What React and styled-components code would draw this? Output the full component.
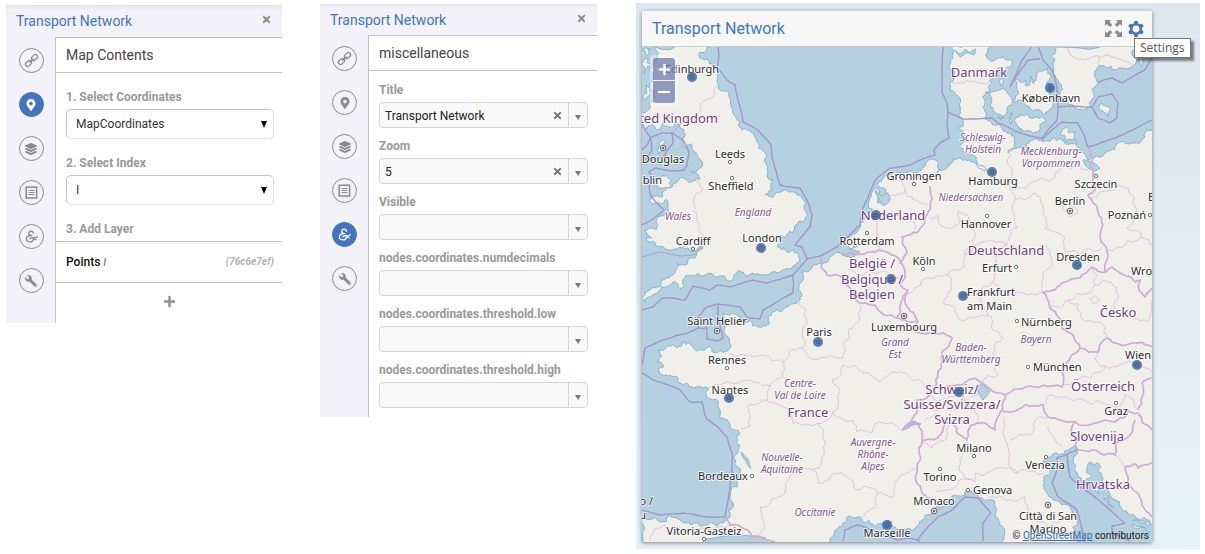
import React from 'react';
import styled, { createGlobalStyle, css } from 'styled-components';
import { FaLayerGroup, FaMapMarkerAlt, FaPlus, FaTimes, FaWrench } from 'react-icons/fa';

const GlobalStyle = createGlobalStyle`
	* {
		box-sizing: border-box;
	}
	body {
		margin: 0;
		background: #fff;
		color: #333;
		font-family: Roboto, 'Liberation Sans', sans-serif;
		font-size: 12px;
		line-height: 16px;
	}
	button, input, select {
		font: inherit;
		color: inherit;
	}
	button {
		padding: 0;
		border: 0;
		background: none;
		cursor: pointer;
	}
`;

const Page = styled.main`
	display: grid;
	grid-template-columns: 276px 276px minmax(0, 1fr);
	column-gap: 38px;
	align-items: start;
	padding: 3px 5px 5px 6px;
`;

/* settings panels */

const Panel = styled.section`
	display: grid;
	grid-template-columns: ${(props) => props.$rail}px 1fr;
	margin-top: ${(props) => props.$top}px;
	background: #f2f2f8;
`;

const PanelHeader = styled.header`
	grid-column: 1 / -1;
	display: flex;
	align-items: center;
	justify-content: space-between;
	height: ${(props) => props.$height}px;
	padding: 0 10px;
	background: linear-gradient(#e4e4ea, #f2f2f8 5px);
`;

const PanelTitle = styled.h2`
	margin: 0;
	font-size: 14px;
	font-weight: 400;
	color: #4475ba;
`;

const CloseButton = styled.button`
	display: flex;
	margin-bottom: 3px;
	color: #8b8b8b;
`;

const Rail = styled.nav`
	display: flex;
	flex-direction: column;
	align-items: center;
	gap: 19px;
	padding: 11px 0 10px 1px;
`;

const RailButton = styled.button`
	display: flex;
	align-items: center;
	justify-content: center;
	width: 25px;
	height: 25px;
	border: 1px solid #8a8a8a;
	border-radius: 50%;
	color: #8a8a8a;
	${(props) =>
		props.$active &&
		css`
			border-color: #4475ba;
			background: #4475ba;
			color: #fff;
		`};
`;

const PanelBody = styled.div`
	border-top: 1px solid #c4c4c8;
	border-left: 1px solid #c4c4c8;
	background: #fff;
`;

const Subtitle = styled.h3`
	margin: 0;
	padding: 9px 10px;
	border-bottom: 1px solid #c4c4c8;
	font-size: 14px;
	font-weight: 400;
	color: #444;
`;

const Fields = styled.div`
	display: flex;
	flex-direction: column;
	gap: ${(props) => props.$gap}px;
	padding: ${(props) => props.$pad};
`;

const Field = styled.div`
	display: flex;
	flex-direction: column;
	gap: 4px;
`;

const Label = styled.label`
	font-weight: 700;
	color: #999;
`;

const SelectBox = styled.div`
	display: grid;
	align-items: center;

	> * {
		grid-area: 1 / 1;
	}
	> svg {
		justify-self: end;
		margin-right: 7px;
		color: #000;
		pointer-events: none;
	}
`;

const Select = styled.select`
	appearance: none;
	width: 100%;
	height: 30px;
	padding: 0 9px;
	border: 1px solid #c4c4c4;
	border-bottom-color: #e4e4e4;
	border-right-color: #dcdcdc;
	border-radius: 5px;
	background: #fff;
`;

const StepTitle = styled.h4`
	margin: 0;
	padding: 0 10px 4px;
	font-size: 12px;
	font-weight: 700;
	color: #999;
`;

const LayerRow = styled.div`
	display: flex;
	align-items: center;
	justify-content: space-between;
	height: 42px;
	padding: 0 8px 0 10px;
	border: solid #c4c4c8;
	border-width: 1px 0;
`;

const LayerName = styled.span`
	font-weight: 500;
	color: #111;

	em {
		font-size: 10px;
		color: #777;
	}
`;

const LayerId = styled.em`
	font-size: 10px;
	font-weight: 700;
	color: #b0b0b0;
`;

const AddButton = styled.button`
	display: flex;
	align-items: center;
	justify-content: center;
	width: 100%;
	height: 40px;
	padding-bottom: 3px;
	color: #8f8f8f;
`;

const Combo = styled.div`
	display: flex;
	height: 26px;
	border: 1px solid #d4d4d4;
	border-radius: 4px;
	background: #f9f9f9;
	overflow: hidden;
`;

const ComboInput = styled.input`
	flex: 1;
	min-width: 0;
	padding: 1px 5px 0;
	border: 0;
	outline: 0;
	background: transparent;
	color: #222;
`;

const ComboButton = styled.button`
	display: flex;
	align-items: center;
	justify-content: center;
	width: ${(props) => (props.$divided ? 19 : 22)}px;
	padding-top: ${(props) => (props.$divided ? 4 : 0)}px;
	border-left: ${(props) => (props.$divided ? '1px solid #d4d4d4' : '0')};
	color: #777;
`;

/* map widget */

const Stage = styled.section`
	margin-left: 2px;
	padding: 8px 48px 7px 6px;
	background: linear-gradient(#dde5ed, #e2eaf2 35%, #e5f1f8);
`;

const MapCard = styled.article`
	background: #f7f7f7;
	box-shadow: 0 1px 4px rgba(0, 0, 0, 0.45);
`;

const MapHeader = styled.header`
	display: flex;
	align-items: center;
	justify-content: space-between;
	height: 36px;
	padding: 0 8px 0 10px;
	border-bottom: 1px solid #ccc;
`;

const MapTitle = styled.h1`
	margin: 0;
	font-size: 16px;
	font-weight: 400;
	color: #4475ba;
`;

const Tools = styled.div`
	display: flex;
	align-items: center;
	gap: 6px;
`;

const ToolButton = styled.button`
	position: relative;
	display: flex;
	color: ${(props) => (props.$active ? '#4475ba' : '#8a8a8a')};
`;

const Tooltip = styled.span`
	position: absolute;
	z-index: 2;
	top: 17px;
	left: 6px;
	padding: 1px 5px;
	border: 1px solid #767676;
	background: #fff;
	box-shadow: 3px 3px 2px rgba(0, 0, 0, 0.45);
	font-family: 'Open Sans', sans-serif;
	color: #575757;
`;

const MapView = styled.div`
	position: relative;
`;

const ZoomControl = styled.div`
	position: absolute;
	top: 8px;
	left: 8px;
	display: flex;
	flex-direction: column;
	gap: 1px;
	padding: 3px;
	border-radius: 4px;
	background: rgba(255, 255, 255, 0.4);
`;

const ZoomButton = styled.button`
	display: flex;
	align-items: center;
	justify-content: center;
	width: 22px;
	height: 22px;
	border-radius: ${(props) => (props.$first ? '3px 3px 0 0' : '0 0 3px 3px')};
	background: rgba(84, 97, 163, 0.62);
	color: #fff;
`;

const Attribution = styled.p`
	position: absolute;
	right: 3px;
	bottom: 0;
	margin: 0;
	font-size: 10px;
	line-height: 12px;
	color: #222;

	a {
		color: #3c6bb0;
	}
`;

const MapSvg = styled.svg`
	display: block;
	width: 100%;
	height: auto;
	background: #b5d0de;
	font-family: 'Noto Sans', sans-serif;
`;

const MapText = styled.text`
	font-size: 11px;
	fill: #2b2b2b;
	stroke: rgba(255, 255, 255, 0.75);
	stroke-width: 2px;
	stroke-linejoin: round;
	paint-order: stroke;
	${(props) =>
		props.$kind === 'country' &&
		css`
			font-size: 13px;
			fill: #703d80;
		`};
	${(props) =>
		props.$kind === 'region' &&
		css`
			font-size: 10px;
			font-style: italic;
			fill: #80588f;
		`};
`;

/* Coast and border points, in map pixels */

const land = [
	// Great Britain
	'655,47 710,47 699,53 704,60 712,64 717,76 719,84 729,93 734,115 742,130 755,137 762,150 768,167 773,180 772,190 765,195 773,197 780,192 797,195 804,208 803,222 793,233 790,231 785,238 778,236 780,242 777,247 787,252 798,253 797,263 780,272 760,275 752,273 748,276 737,273 730,281 718,277 705,275 692,275 683,282 682,288 670,285 660,290 650,297 645,302 642,298 650,290 667,278 677,263 693,258 703,248 700,246 693,252 680,247 667,250 656,246 648,242 646,238 652,238 644,231 656,230 663,216 668,208 667,200 659,203 649,201 652,197 662,197 671,188 676,183 686,179 693,181 700,179 691,172 697,170 702,167 698,158 693,150 691,144 686,148 683,138 684,130 676,123 670,127 663,123 659,130 652,125 647,129 643,121 650,108 655,97 650,87 653,76 649,70 656,60',
	'657,150 662,140 666,142 665,150 658,154',
	'655,180 662,176 670,179 671,185 664,188 657,186',
	'643,100 646,85 650,90 648,97',
	'643,62 648,58 650,66 644,74',
	'642,50 650,48 646,55',
	// Mainland
	'951,47 991,47 986,54 994,60 1003,56 1012,60 1010,67 1001,68 995,76 990,80 990,90 983,97 985,103 983,108 987,113 985,118 993,125 1002,128 1010,133 1015,143 1008,153 1025,148 1038,140 1047,141 1053,137 1056,140 1062,139 1067,145 1072,143 1078,150 1088,160 1097,156 1115,150 1135,143 1145,133 1158,126 1158,524 1145,518 1140,520 1128,513 1120,506 1115,500 1108,490 1102,477 1101,467 1097,463 1093,466 1090,462 1092,477 1085,484 1080,477 1075,468 1073,457 1078,452 1077,447 1066,450 1055,453 1043,462 1050,472 1044,478 1044,487 1050,497 1062,505 1072,512 1078,520 1085,548 1007,548 1005,533 1000,523 997,510 988,500 977,495 967,490 955,495 942,507 932,513 922,520 915,528 910,529 893,527 887,521 880,523 872,524 863,522 857,517 843,523 835,530 835,548 636,548 636,517 660,522 680,520 697,523 710,522 723,523 730,517 733,503 737,487 738,467 738,450 740,445 737,440 738,430 730,427 720,418 718,403 710,399 707,398 708,390 702,387 694,388 687,383 678,382 670,375 658,370 664,366 657,362 662,356 658,350 677,348 690,343 694,349 702,350 708,347 713,352 720,350 730,348 725,327 722,313 729,315 737,315 740,323 758,327 766,326 768,318 772,312 787,307 800,300 801,292 802,272 812,267 827,262 840,253 848,256 860,252 850,249 858,246 843,245 852,235 860,228 865,218 870,198 875,188 879,192 877,202 884,206 884,202 890,196 884,188 877,183 883,177 895,173 913,171 925,163 935,160 938,165 937,173 943,170 948,167 953,158 962,160 972,162 987,170 977,162 965,153 960,145 967,141 961,138 965,133 957,128 963,123 958,117 960,107 957,95 950,90 949,67 952,55',
	// Danish islands and Sweden
	'987,93 994,92 1003,88 1008,94 1012,100 1008,112 995,113 990,105',
	'1013,112 1011,124 1009,121 1011,113',
	'997,117 1004,117 1001,120',
	'1015,80 1021,82 1025,80 1026,86 1029,86 1031,76 1034,84 1037,73 1047,68 1052,77 1046,84 1050,90 1050,97 1053,103 1043,115 1030,109 1015,103 1016,96 1019,92',
	'1015,118 1028,115 1032,119 1043,117 1045,122 1036,132 1028,130 1017,125',
	'1000,80 1002,76 1001,86',
	'1058,47 1052,55 1053,63 1058,80 1062,90 1058,98 1075,108 1090,107 1092,90 1098,83 1097,68 1115,70 1121,68 1132,67 1133,50 1140,47',
	'1060,134 1066,127 1069,133 1076,132 1077,143 1072,139 1066,142',
	'1102,103 1110,108 1108,117 1100,110',
	'1139,58 1143,52 1142,66',
	// Croatian islands
	'1085,486 1087,482 1089,490',
	'1093,488 1098,486 1099,494',
	'1103,498 1108,497 1114,507',
	'1132,524 1144,527 1150,532 1138,529',
	'1133,520 1148,522 1151,524',
];

const lakes = [
	'954,50 960,54 965,49 970,53 976,49 974,55 966,53 960,57',
	'875,190 882,196 888,193 890,200 884,206 880,202',
	'983,400 976,386 981,384 987,388 990,391',
	'903,430 907,424 915,421 921,424 913,425',
	'1083,160 1094,163 1100,168 1093,171 1086,166',
	'741,452 748,459 751,469 747,464',
	'1018,127 1022,129 1020,131',
];

const seaLines = [
	'718,47 719,55 717,68 727,80 735,85 738,100 743,122 758,130 771,145 772,157 780,185 800,188 807,200 812,215 810,227 795,245 802,247 807,259 820,256 837,247 860,225 863,208 872,187 877,178 890,168 910,165 920,160 935,155 934,150 940,143 949,138 947,125 948,112 947,103 942,93 942,67 943,47',
	'807,259 793,275 793,293 777,302 763,310 760,319 747,318 740,307 718,304 705,308 698,318 698,328 690,332 663,340 645,348 642,365',
	'793,275 767,283 753,280 730,287 717,285 710,290 693,286 685,300 662,298 653,307 642,310',
	'718,304 718,318 723,338 718,341 707,339 707,328 698,328',
	'642,373 653,380 680,390 690,402 702,402 706,418 718,427 727,437 732,453 730,487 725,517 707,517 683,513 660,515 642,510',
	'843,541 845,530 857,525 880,533 897,540 908,538 920,541',
	'917,541 925,530 938,517 952,510 965,497 978,498 991,513 983,523 983,541',
	'1077,450 1057,458 1057,470 1052,483 1058,497 1077,510 1082,530 1085,542',
	'1067,454 1070,477 1082,488 1102,503 1125,523 1112,526 1112,533 1130,541',
	'1032,47 1022,60 1010,87 1022,68 1028,60 1040,59',
	'1038,47 1043,60 1053,72 1057,88 1058,107 1092,107 1098,97 1112,94 1118,103 1117,118 1110,123 1098,118 1092,107',
	'1058,107 1057,120 1042,138 1030,136 1015,131 998,123 992,118 963,119 948,112',
	'1042,140 1062,122 1078,123 1085,137 1088,147 1115,138 1152,120',
	'1098,82 1112,78 1122,83 1135,75 1145,70 1152,57',
	'642,150 647,145 651,137 662,133 672,133 683,140 689,152 687,165 684,170 675,171 655,168 649,172 653,178 649,187 651,196 664,210 657,216 642,225',
	'642,124 650,137 652,150 645,160',
	'672,133 673,143 664,156 652,160',
];

const faintSeaLines = ['642,257 660,252 680,256 693,255 703,248', '672,133 683,122'];

const borders = [
	'930,186 928,212 918,232 902,237 907,252 900,263 905,273 900,285 908,290 905,300 913,312 918,322 915,332 933,333 952,338 942,352 938,372 935,388',
	'820,257 827,275 837,275 850,288 860,303 875,305 897,318 918,322',
	'908,292 901,302 897,318',
	'842,254 860,254 880,250 890,254 902,263',
	'1088,147 1093,173 1095,190 1088,195 1098,212 1100,238 1107,252 1105,272 1092,267 1065,282 1043,293 1050,308 1062,328 1080,348 1098,352 1107,338 1132,343 1152,347',
	'1105,272 1112,267 1135,282 1140,280 1139,290 1145,297 1152,288',
	'1080,348 1067,362 1062,387 1025,387 1005,395 982,383 975,378 962,385 935,388 917,400 913,418 903,430 917,423 922,442 938,438 945,424 953,423 957,433 967,440 972,425 978,423 995,430 997,418 1003,410 1005,395',
	'1003,412 1025,405 1043,405 1048,417 1075,422 1115,422 1128,410 1138,413 1152,430',
	'1138,410 1142,383 1152,378',
	'1075,422 1071,430 1078,450 1095,450 1115,455 1116,443 1128,437 1135,420',
	'1152,463 1138,468 1135,464 1125,467 1128,483 1142,503 1152,517',
	'922,442 917,467 922,493 936,500 940,510',
	'725,517 730,525 745,529 753,537 775,541',
	'963,119 958,118',
];

const regions = [
	'726,80 715,88 714,96 700,110 693,118 686,124',
	'687,174 698,182 702,190 694,200 697,222 703,236 703,245',
	'798,300 805,308 803,332 802,348 783,362 763,355 730,354',
	'860,305 860,318 843,345 843,358 810,358 802,348',
	'783,362 783,377 770,386 767,400 747,407 750,427 740,428',
	'708,388 725,383 745,380 770,386',
	'767,400 783,407 793,423 818,423 833,412 832,380 843,365 863,372 880,382 897,373 920,380 935,388',
	'818,423 823,437 822,457 813,470 817,483 832,475 847,477 857,490 877,493 893,497 893,490 900,477 918,468',
	'813,470 797,473 785,493 760,507 763,520 758,541',
	'833,412 853,420 857,432 873,432 878,422 903,430',
	'877,493 875,507 863,517',
	'650,541 665,525 690,530 715,528 730,525',
	'930,218 938,215 947,228 960,222 958,212 968,215 968,226 975,236 965,255 948,275 935,277 915,288 908,295',
	'965,255 990,240 1007,245 1017,228 1015,198 1012,173 1010,153',
	'1015,198 1035,193 1043,205 1045,228 1065,238 1065,252 1080,254 1102,247',
	'1015,190 1032,182 1062,167 1093,170',
	'948,275 950,292 943,302 955,308 958,318 973,317 988,315 1003,338 995,365 998,375 982,383',
	'1007,245 995,255 992,282 1003,292 1018,292 1043,292 1052,265 1047,245',
	'988,315 980,300 992,282',
	'1062,208 1070,203 1078,213 1070,217 1062,208',
	'1092,198 1110,190 1128,188 1127,228 1142,238 1152,245',
	'1107,250 1128,240 1142,238',
	'1050,307 1068,300 1078,303 1082,318 1105,328 1107,338',
	'1068,300 1090,292 1095,285 1092,267',
	'1095,285 1112,283 1118,295 1115,312 1130,318 1148,322 1152,300',
	'1089,299 1095,296 1100,300 1094,304 1089,299',
	'1098,352 1095,360 1105,366 1100,372 1080,378 1062,387',
	'1043,405 1050,395 1062,397 1090,404 1115,407 1125,395 1138,410',
	'1105,366 1125,363 1152,372',
	'1005,417 1008,447 1018,473 1045,473',
	'1018,473 998,468 975,473 975,482 948,490 935,492',
	'967,440 960,460 975,482',
	'1048,417 1035,420 1030,435 1010,440',
	'1048,427 1055,440 1062,447',
	'988,497 1010,500 1025,497 1032,517 1048,528 1062,520',
	'1068,47 1075,58 1095,56 1115,57 1132,67',
	'1098,68 1098,56',
	'952,82 968,80 982,83 993,75',
	'922,442 932,448 945,440 953,423',
	'920,410 930,402 935,412 945,402 955,410 965,400 975,412 978,423',
	'925,420 938,415 945,424',
	'930,395 942,400 955,395 968,400 980,395',
	'852,270 862,276 880,272 894,278 905,273',
	'880,250 876,232 880,218 890,212 902,218 915,230',
	'885,202 895,196 905,190 905,172',
	'905,190 915,200 928,205',
	'1115,455 1125,467',
];

// Deterministic midpoint displacement, so that coasts come out ragged
function roughen(list, amount, closed) {
	let pts = list.split(' ').map((pair) => pair.split(',').map(Number));
	if (closed) pts.push(pts[0]);
	for (let pass = 0; pass < 3; pass++) {
		const next = [pts[0]];
		for (let i = 1; i < pts.length; i++) {
			const [ax, ay] = pts[i - 1];
			const [bx, by] = pts[i];
			const noise = Math.sin(ax * 12.9 + ay * 78.2 + bx * 3.7) * 4375.5;
			const shift = (noise - Math.floor(noise) - 0.5) * 2 * amount;
			next.push([(ax + bx) / 2 + (by - ay) * shift, (ay + by) / 2 - (bx - ax) * shift], [bx, by]);
		}
		pts = next;
	}
	return pts.map(([x, y]) => `${x.toFixed(1)},${y.toFixed(1)}`).join(' ');
}

// text, x, baseline, kind, anchor
const labels = [
	['United Kingdom', 718, 123, 'country', 'end'],
	['Danmark', 979, 77, 'country'],
	['Nederland', 893, 220, 'country'],
	['België /', 872, 268, 'country'],
	['Belgique /', 872, 284, 'country'],
	['Belgien', 872, 299, 'country'],
	['Deutschland', 1006, 255, 'country'],
	['Česko', 1118, 317, 'country'],
	['Österreich', 1103, 391, 'country'],
	['Schweiz/', 952, 394, 'country'],
	['Suisse/Svizzera/', 952, 409, 'country'],
	['Svizra', 952, 424, 'country'],
	['Slovenija', 1097, 441, 'country'],
	['Hrvatska', 1103, 489, 'country'],
	['France', 808, 417, 'country'],
	['England', 753, 216, 'region'],
	['Wales', 678, 220, 'region'],
	['Schleswig-', 983, 141, 'region'],
	['Holstein', 983, 153, 'region'],
	['Mecklenburg-', 1051, 155, 'region'],
	['Vorpommern', 1051, 167, 'region'],
	['Niedersachsen', 971, 201, 'region'],
	['Bayern', 1036, 343, 'region'],
	['Baden-', 971, 351, 'region'],
	['Württemberg', 971, 363, 'region'],
	['Grand', 895, 346, 'region'],
	['Est', 895, 358, 'region'],
	['Centre-', 800, 387, 'region'],
	['Val de Loire', 800, 399, 'region'],
	['Auvergne-', 873, 446, 'region'],
	['Rhône-', 873, 458, 'region'],
	['Alpes', 873, 470, 'region'],
	['Nouvelle-', 782, 461, 'region'],
	['Aquitaine', 782, 473, 'region'],
	['Occitanie', 815, 516, 'region'],
	['Edinburgh', 692, 73, 'city'],
	['Douglas', 663, 163, 'city'],
	['Dublin', 662, 184, 'city', 'end'],
	['Leeds', 730, 158, 'city'],
	['Sheffield', 731, 190, 'city'],
	['Cardiff', 693, 245, 'city'],
	['London', 762, 242, 'city'],
	['Saint Helier', 717, 325, 'city'],
	['Paris', 819, 336, 'city'],
	['Rennes', 727, 364, 'city'],
	['Nantes', 730, 394, 'city'],
	['Bordeaux', 723, 480, 'city'],
	['Oviedo /', 653, 505, 'city', 'end'],
	['Uviéu', 646, 519, 'city', 'end'],
	['Vitoria-Gasteiz', 704, 535, 'city'],
	['Marseille', 887, 537, 'city'],
	['Monaco', 934, 505, 'city'],
	['Torino', 940, 481, 'city'],
	['Milano', 974, 452, 'city'],
	['Genova', 973, 494, 'city', 'start'],
	['Venezia', 1045, 469, 'city'],
	['Città di San', 1048, 520, 'city'],
	['Marino', 1048, 533, 'city'],
	['Graz', 1116, 415, 'city'],
	['Wien', 1138, 359, 'city'],
	['München', 1033, 371, 'city', 'start'],
	['Nürnberg', 1021, 326, 'city', 'start'],
	['Luxembourg', 904, 331, 'city'],
	['Frankfurt', 967, 296, 'city', 'start'],
	['am Main', 967, 310, 'city', 'start'],
	['Köln', 924, 265, 'city'],
	['Erfurt', 997, 272, 'city'],
	['Dresden', 1078, 261, 'city'],
	['Wrocław', 1131, 275, 'city', 'start'],
	['Rotterdam', 867, 245, 'city'],
	['Groningen', 914, 180, 'city'],
	['Hannover', 986, 228, 'city'],
	['Berlin', 1070, 205, 'city'],
	['Poznań', 1146, 219, 'city', 'end'],
	['Bydgoszcz', 1148, 201, 'city', 'start'],
	['Szczecin', 1096, 188, 'city'],
	['Hamburg', 993, 185, 'city'],
	['København', 1051, 102, 'city'],
];

const towns = [
	[730, 162], [732, 178], [693, 249], [867, 233], [914, 184], [1096, 176], [987, 216], [1150, 215],
	[923, 269], [1016, 267], [1017, 321], [1028, 367], [1116, 403], [974, 456], [940, 469], [968, 490],
	[1046, 457], [727, 368], [752, 476], [704, 539],
];

const capitals = [[663, 148], [717, 331], [904, 316], [1070, 211], [934, 511], [1048, 505]];

const nodes = [
	[692, 77], [761, 248], [876, 215], [891, 279], [818, 342], [729, 398], [887, 525], [963, 296],
	[992, 172], [1050, 88], [1077, 265], [959, 392], [1137, 365],
];

function EuropeMap() {
	return (
		<MapSvg viewBox="642 47 510 495" role="img" aria-label="Map of Europe">
			<g fill="#f1efea" stroke="#86b3cf" strokeLinejoin="round">
				{land.map((shape) => (
					<polygon key={shape} points={roughen(shape, 0.3, true)} />
				))}
			</g>
			<g fill="#b5d0de" stroke="#86b3cf">
				{lakes.map((shape) => (
					<polygon key={shape} points={roughen(shape, 0.1, true)} />
				))}
			</g>
			<g fill="none" stroke="#dcc6e0" strokeLinejoin="round">
				{regions.map((line) => (
					<polyline key={line} points={roughen(line, 0.24)} />
				))}
			</g>
			<g fill="none" stroke="#cdacd6" strokeWidth="1.7" strokeLinejoin="round">
				{borders.map((line) => (
					<polyline key={line} points={roughen(line, 0.16)} />
				))}
			</g>
			<g fill="none" stroke="#a9a3d0">
				{faintSeaLines.map((line) => (
					<polyline key={line} points={line} />
				))}
			</g>
			<g fill="none" stroke="#a295c9" strokeWidth="1.4" strokeLinejoin="round">
				{seaLines.map((line) => (
					<polyline key={line} points={roughen(line, 0.03)} />
				))}
			</g>
			<g fill="#fff" stroke="#666">
				{towns.map(([x, y]) => (
					<circle key={`${x}-${y}`} cx={x} cy={y} r="1.7" strokeWidth="0.9" />
				))}
				{capitals.map(([x, y]) => (
					<g key={`${x}-${y}`}>
						<circle cx={x} cy={y} r="2.8" />
						<circle cx={x} cy={y} r="1" fill="#555" />
					</g>
				))}
			</g>
			{labels.map(([text, x, y, kind, anchor = 'middle']) => (
				<MapText key={text} x={x} y={y} textAnchor={anchor} $kind={kind}>
					{text}
				</MapText>
			))}
			{nodes.map(([x, y]) => (
				<g key={`${x}-${y}`}>
					<circle cx={x} cy={y} r="5" fill="#43699f" fillOpacity="0.85" />
					<circle cx={x} cy={y} r="2" fill="none" stroke="#35588c" strokeWidth="0.8" />
				</g>
			))}
		</MapSvg>
	);
}

const LinkIcon = () => (
	<svg width="15" height="15" viewBox="0 0 16 16" fill="none" stroke="currentColor" strokeWidth="1.3">
		<rect x="7.6" y="2.6" width="7.2" height="4.6" rx="2.2" transform="rotate(-42 11.2 4.9)" />
		<rect x="1.2" y="8.8" width="7.2" height="4.6" rx="2.2" transform="rotate(-42 4.8 11.1)" />
		<path d="M5.6 10.4l4.8-4.6" />
	</svg>
);

const ListIcon = () => (
	<svg width="13" height="13" viewBox="0 0 13 13" fill="none" stroke="currentColor">
		<rect x="1.2" y="1.2" width="10.4" height="10.8" strokeWidth="1.5" />
		<path d="M3.5 4.5h6M3.5 6.5h6M3.5 8.5h6" />
	</svg>
);

const AmpersandIcon = () => (
	<svg width="15" height="15" viewBox="0 0 16 16" fill="none" stroke="currentColor" strokeWidth="1.4" strokeLinecap="round">
		<path d="M10 4.600C10.200 1.800 5 1.600 5 4.500c0 1.700 1.400 2.500 3.400 2.500" />
		<path d="M7.400 7C4.400 7 2.600 8.600 2.600 10.700c0 4.200 7.400 4.300 7.400-.7" />
		<path d="M6.400 10.200c.9-1.600 2.800-.9 4.600-.7 1.600.2 2.800-.2 3-1.500M10.800 9.800c.2 1.200 1 1.700 2 1.500" />
	</svg>
);

const ExpandIcon = () => (
	<svg width="17" height="17" viewBox="0 0 17 17" fill="currentColor">
		<path d="M0 0h6L4.300 1.700 7.300 4.700 5 7 2 4 0 6zM17 0v6l-2-2-3 3-2.300-2.300 3-3L11 0zM0 17v-6l2 2 3-3 2.300 2.300-3 3L6 17zM17 17h-6l1.700-1.700-3-3L12 10l3 3 2-2z" />
	</svg>
);

const GearIcon = () => (
	<svg width="16" height="16" viewBox="-8 -8 16 16" fill="none" stroke="currentColor">
		<circle r="4.700" strokeWidth="2.600" />
		{[0, 60, 120, 180, 240, 300].map((angle) => (
			<path key={angle} d="M-2.300-5L-1.500-8h3l.8 3z" fill="currentColor" stroke="none" transform={`rotate(${angle})`} />
		))}
	</svg>
);

const Caret = ({ width = 6, height = 7 }) => (
	<svg width={width} height={height} viewBox="0 0 7 7" preserveAspectRatio="none" fill="currentColor">
		<path d="M0 0h7L3.500 7z" />
	</svg>
);

const railItems = [
	{ id: 'links', label: 'Links', icon: <LinkIcon /> },
	{ id: 'map', label: 'Map contents', icon: <FaMapMarkerAlt size={12} /> },
	{ id: 'layers', label: 'Layers', icon: <FaLayerGroup size={12} /> },
	{ id: 'list', label: 'List', icon: <ListIcon /> },
	{ id: 'misc', label: 'Miscellaneous', icon: <AmpersandIcon /> },
	{ id: 'tools', label: 'Tools', icon: <FaWrench size={12} transform="scale(-1 1)" /> },
];

function PanelRail({ active }) {
	return (
		<Rail>
			{railItems.map(({ id, label, icon }) => (
				<RailButton key={id} type="button" aria-label={label} $active={id === active}>
					{icon}
				</RailButton>
			))}
		</Rail>
	);
}

function SelectField({ id, label, value }) {
	return (
		<Field>
			<Label htmlFor={id}>{label}</Label>
			<SelectBox>
				<Select id={id} defaultValue={value}>
					<option>{value}</option>
				</Select>
				<Caret />
			</SelectBox>
		</Field>
	);
}

function ComboField({ label, value = '' }) {
	return (
		<Field>
			<Label htmlFor={label}>{label}</Label>
			<Combo>
				<ComboInput id={label} type="text" defaultValue={value} />
				{value && (
					<ComboButton type="button" aria-label={`Clear ${label}`}>
						<FaTimes size={11} />
					</ComboButton>
				)}
				<ComboButton type="button" aria-label={`Open ${label}`} $divided>
					<Caret width={6} height={5} />
				</ComboButton>
			</Combo>
		</Field>
	);
}

const miscFields = [
	{ label: 'Title', value: 'Transport Network' },
	{ label: 'Zoom', value: '5' },
	{ label: 'Visible' },
	{ label: 'nodes.coordinates.numdecimals' },
	{ label: 'nodes.coordinates.threshold.low' },
	{ label: 'nodes.coordinates.threshold.high' },
];

export default function App() {
	return (
		<>
			<GlobalStyle />
			<Page>
				<Panel $rail={49} $top={2}>
					<PanelHeader $height={32}>
						<PanelTitle>Transport Network</PanelTitle>
						<CloseButton type="button" aria-label="Close">
							<FaTimes size={11} />
						</CloseButton>
					</PanelHeader>
					<PanelRail active="map" />
					<PanelBody>
						<Subtitle>Map Contents</Subtitle>
						<Fields $gap={16} $pad="16px 8px 16px 10px">
							<SelectField id="coordinates" label="1. Select Coordinates" value="MapCoordinates" />
							<SelectField id="index" label="2. Select Index" value="I" />
						</Fields>
						<StepTitle>3. Add Layer</StepTitle>
						<LayerRow>
							<LayerName>
								Points <em>I</em>
							</LayerName>
							<LayerId>(76c6e7ef)</LayerId>
						</LayerRow>
						<AddButton type="button" aria-label="Add layer">
							<FaPlus size={13} />
						</AddButton>
					</PanelBody>
				</Panel>

				<Panel $rail={48} $top={1}>
					<PanelHeader $height={31}>
						<PanelTitle>Transport Network</PanelTitle>
						<CloseButton type="button" aria-label="Close">
							<FaTimes size={11} />
						</CloseButton>
					</PanelHeader>
					<PanelRail active="misc" />
					<PanelBody>
						<Subtitle>miscellaneous</Subtitle>
						<Fields $gap={10} $pad="11px 9px 9px 10px">
							{miscFields.map((field) => (
								<ComboField key={field.label} {...field} />
							))}
						</Fields>
					</PanelBody>
				</Panel>

				<Stage>
					<MapCard>
						<MapHeader>
							<MapTitle>Transport Network</MapTitle>
							<Tools>
								<ToolButton type="button" aria-label="Full screen">
									<ExpandIcon />
								</ToolButton>
								<ToolButton type="button" aria-label="Settings" $active>
									<GearIcon />
									<Tooltip role="tooltip">Settings</Tooltip>
								</ToolButton>
							</Tools>
						</MapHeader>
						<MapView>
							<EuropeMap />
							<ZoomControl>
								<ZoomButton type="button" aria-label="Zoom in" $first>
									<FaPlus size={13} />
								</ZoomButton>
								<ZoomButton type="button" aria-label="Zoom out">
									<svg width="12" height="2" fill="currentColor">
										<rect width="12" height="2" />
									</svg>
								</ZoomButton>
							</ZoomControl>
							<Attribution>
								© <a href="#osm">OpenStreetMap</a> contributors
							</Attribution>
						</MapView>
					</MapCard>
				</Stage>
			</Page>
		</>
	);
}
